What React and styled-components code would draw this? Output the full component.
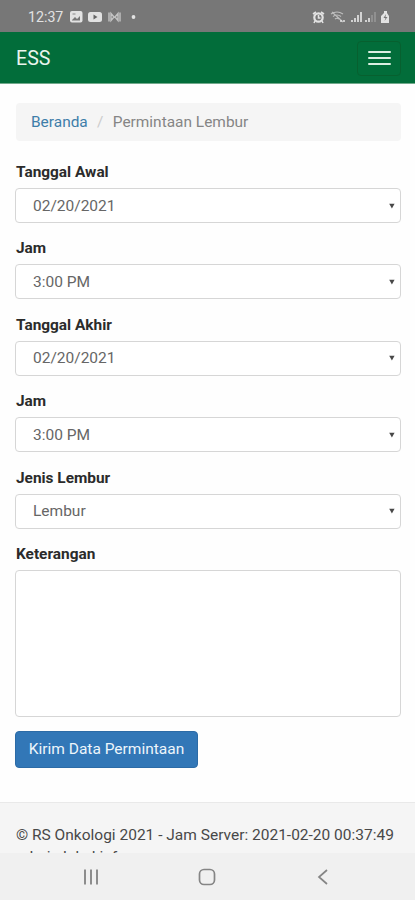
import React from "react";
import styled, { createGlobalStyle } from "styled-components";

const Global = createGlobalStyle`
  * { box-sizing: border-box; }
  body { margin: 0; background: #fff; font-family: Roboto, "Liberation Sans", sans-serif; }
`;
const Screen = styled.div`
  width: 100%; height: 900px; display: flex; flex-direction: column; overflow: hidden; background: #fefefe;
`;
const StatusBar = styled.header`
  height: 32px; flex: none; background: #777; display: flex; justify-content: space-between;
  align-items: center; padding: 1px 25px 0 28px; color: #e2e2e2;
`;
const Clock = styled.span`
  font-size: 14.2px; line-height: 16px; width: 42px; white-space: nowrap;
`;
const Icons = styled.div`display: flex; align-items: center;`;
const Navbar = styled.nav`
  height: 52px; flex: none; background: #026d3a; border-bottom: 1px solid #71a98b; display: flex;
  align-items: center; justify-content: space-between; padding: 1px 14px 0 16px;
`;
const Brand = styled.span`color: #e9f5ed; font-size: 19.6px; line-height: 24px; padding-top: 1px;`;
const MenuButton = styled.button`
  width: 44px; height: 35px; padding: 0; border: 1px solid #07602f; border-radius: 4px;
  background: transparent; display: flex; flex-direction: column; gap: 4px; align-items: center; justify-content: center;
`;
const Bar = styled.span`width: 23px; height: 2px; border-radius: 1px; background: #dcefe2;`;
const Main = styled.main`
  height: 718px; flex: none; padding: 19px 14px 0 15px; display: flex; flex-direction: column; align-items: stretch;
`;
const Breadcrumb = styled.div`
  height: 38px; flex: none; margin-left: 1px; background: #f5f5f5; border-radius: 4px; display: flex; align-items: center;
  padding-left: 15px; font-size: 15.45px; color: #858585; margin-bottom: 22px; white-space: nowrap;
`;
const Link = styled.a`color: #3e7ea9;`;
const Slash = styled.span`color: #ccc; width: 25px; text-align: center;`;
const Field = styled.div`height: 76.4px; flex: none;`;
const Label = styled.label`
  display: block; height: 25px; padding-left: 1px; font-size: 15.4px; line-height: 19px; font-weight: 700; color: #2b2b2b;
`;
const Select = styled.div`
  height: 35px; border: 1px solid #d6d6d6; border-radius: 4px; background: #fff; display: flex; align-items: center;
  justify-content: space-between; padding: 0 5px 0 17px; font-size: 15.5px; color: #666;
`;
const TextArea = styled.textarea`
  display: block; width: 100%; height: 147px; flex: none; border: 1px solid #d6d6d6; border-radius: 4px;
  background: #fff; resize: none; outline: none;
`;
const Submit = styled.button`
  width: 183px; height: 37px; margin-top: 14px; border: 1px solid #2c6ba6; border-radius: 4px; background: #3277b7;
  color: #edf5fb; font: 15.5px Roboto, sans-serif; padding: 0; white-space: nowrap;
`;
const Footer = styled.footer`
  height: 51px; flex: none; overflow: hidden; background: #f5f5f5; border-top: 1px solid #e9e9e9;
  padding: 21px 0 0 16px; font-size: 15.5px; line-height: 22px; color: #484848; white-space: nowrap;
`;
const Line = styled.div`height: 22px; line-height: 22px;`;
const SystemNav = styled.nav`
  flex: 1; background: #f0f0f0; display: grid; grid-template-columns: 116px 116px 116px; justify-content: center;
  justify-items: center; align-items: center; padding-right: 1px; svg { display: block; }
`;

const fields = [
  ["Tanggal Awal", "02/20/2021"],
  ["Jam", "3:00 PM"],
  ["Tanggal Akhir", "02/20/2021"],
  ["Jam", "3:00 PM"],
  ["Jenis Lembur", "Lembur"],
];

function Notifications() {
  return (
    <svg width="68" height="14" viewBox="0 0 68 14" fill="#e2e2e2">
      <rect x="0" y="1" width="12.5" height="11.5" rx="2" />
      <path d="M2 10l3-3 2 2 3-3v4.5H2z" fill="#777" />
      <path d="M2.5 4h3" stroke="#888" />
      <rect x="18" y="2" width="14" height="10" rx="2.5" />
      <path d="M23.5 4.5v5l4-2.5z" fill="#666" />
      <path d="M39 2.5v9M50 2.5v9M41 3.5l3 3.5-3 3.5zM48 3.5L45 7l3 3.5z" stroke="#c4c4c4" strokeWidth="1.4" fill="none" />
      <circle cx="63.5" cy="7" r="1.9" />
    </svg>
  );
}

function DeviceStatus() {
  return (
    <svg width="79" height="14" viewBox="0 0 79 14" fill="none" stroke="#e2e2e2">
      <circle cx="7.5" cy="7.5" r="4.2" strokeWidth="2.2" />
      <path d="M2 4l3-2M10 2l3 2M7.5 5v3h2M4 11l-1 2M11 11l1 2" strokeWidth="1.6" />
      <path d="M20 4q6-4 12 0M22 6.5q4-3 8 0M24 9q2-1.5 4 0M21 2l11 10" stroke="#bebebe" strokeWidth="1.2" />
      <path d="M30 12v-2M33 12v-2" strokeWidth="1.5" />
      <path d="M41 12v-2M44 12V8M47 12V5M50 12V2M55 12v-2M58 12V8" strokeWidth="1.7" />
      <path d="M61 12V5M64 12V2" stroke="#999" strokeWidth="1.5" />
      <path d="M73 1h3v2l2 3v7h-8V6l3-3z" fill="#e2e2e2" stroke="none" />
      <path d="M75 4l-2.5 4h2l-1 3 3-4h-2z" fill="#777" stroke="none" />
    </svg>
  );
}

function Caret() {
  return <svg width="6" height="6" viewBox="0 0 6 6"><path d="M.2 .7h5.4L2.9 5.5z" fill="#484848" /></svg>;
}

export default function App() {
  return (
    <Screen>
      <Global />
      <StatusBar>
        <Icons><Clock>12:37</Clock><Notifications /></Icons>
        <DeviceStatus />
      </StatusBar>
      <Navbar>
        <Brand>ESS</Brand>
        <MenuButton aria-label="Menu"><Bar /><Bar /><Bar /></MenuButton>
      </Navbar>
      <Main>
        <Breadcrumb><Link>Beranda</Link><Slash>/</Slash><span>Permintaan Lembur</span></Breadcrumb>
        {fields.map(([label, value], i) => (
          <Field key={i}>
            <Label>{label}</Label>
            <Select><span>{value}</span><Caret /></Select>
          </Field>
        ))}
        <Label as="div">Keterangan</Label>
        <TextArea aria-label="Keterangan" />
        <Submit>Kirim Data Permintaan</Submit>
      </Main>
      <Footer>
        <Line>© RS Onkologi 2021 - Jam Server: 2021-02-20 00:37:49</Line>
        <Line>admin lokal info</Line>
      </Footer>
      <SystemNav>
        <svg width="18" height="18" viewBox="0 0 18 18" stroke="#8d8d8d" strokeWidth="2"><path d="M3 1.5v15M9 1.5v15M15 1.5v15" /></svg>
        <svg width="18" height="18" viewBox="0 0 18 18" fill="none" stroke="#858585" strokeWidth="1.7"><rect x="1.5" y="1.5" width="15" height="15" rx="4.5" /></svg>
        <svg width="18" height="18" viewBox="0 0 18 18" fill="none" stroke="#858585" strokeWidth="1.7"><path d="M13 2L5 9l8 7" /></svg>
      </SystemNav>
    </Screen>
  );
}
